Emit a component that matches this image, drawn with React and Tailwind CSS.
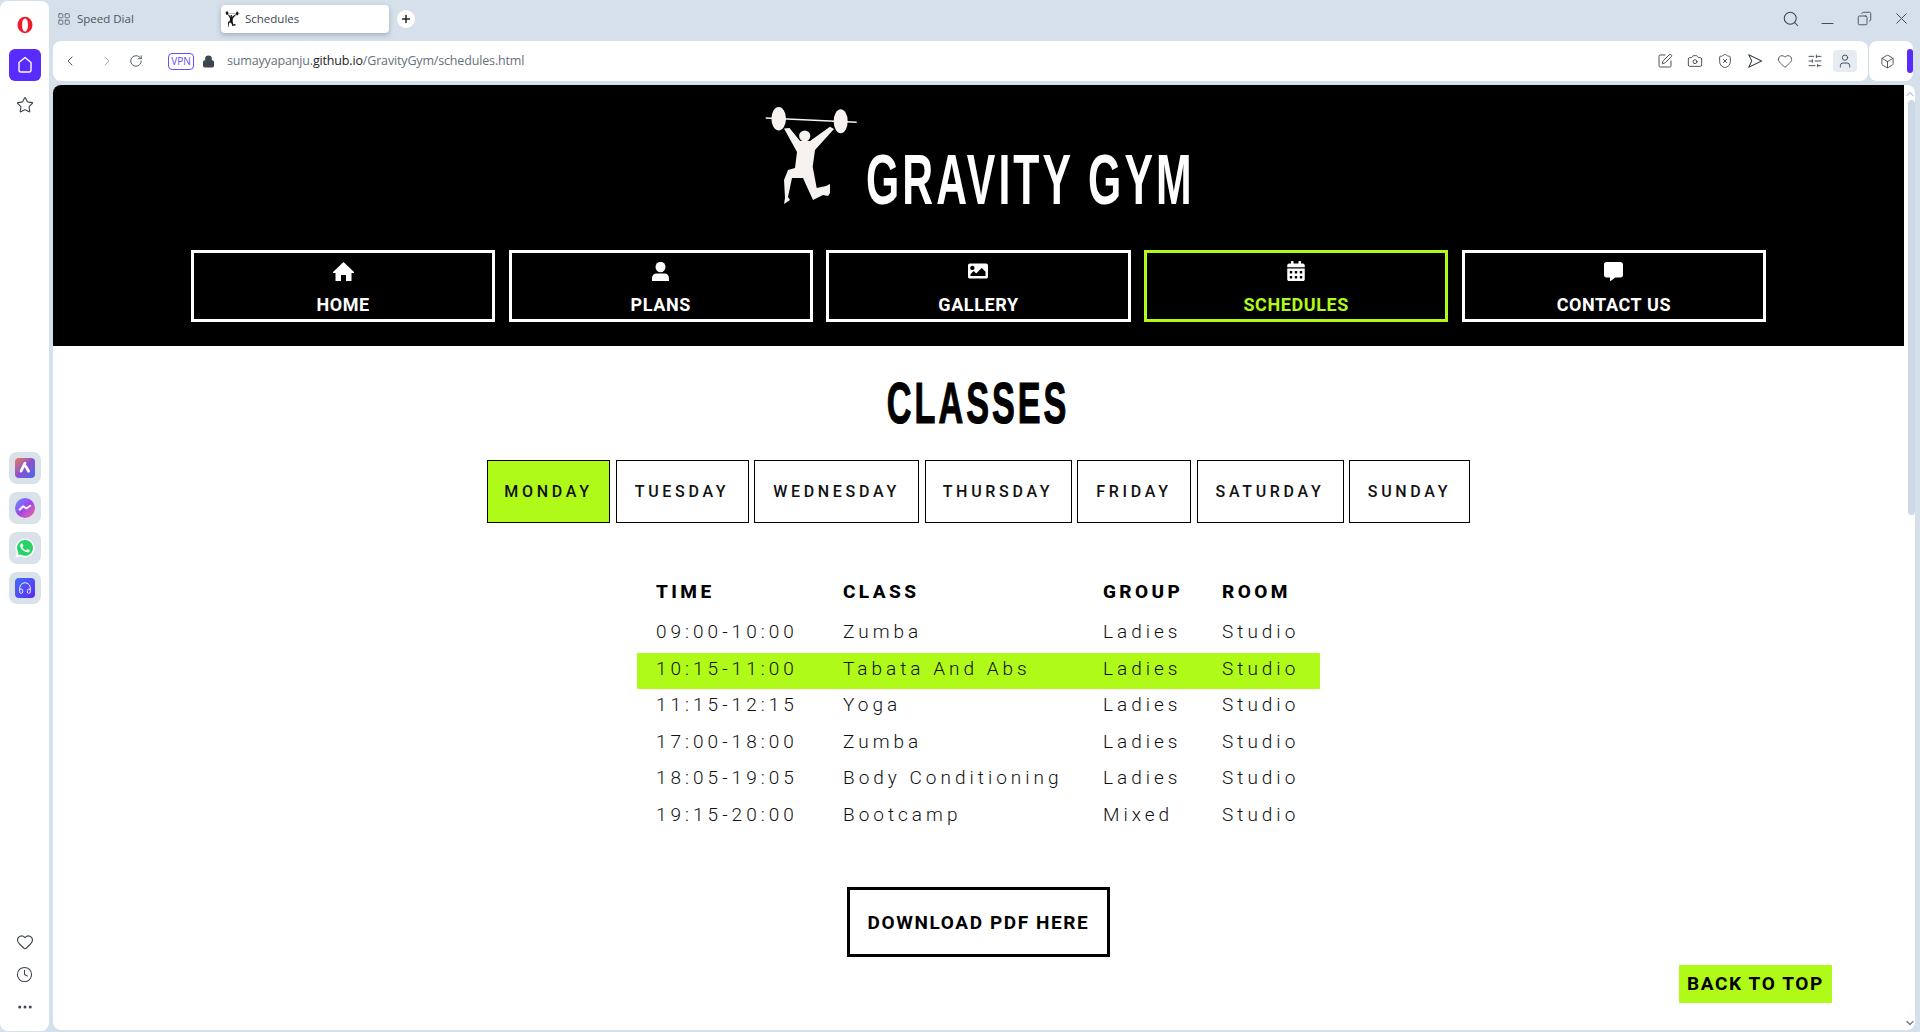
import { Camera, ChevronDown, ChevronLeft, ChevronRight, ChevronUp, Clock, Copy, Box, Headphones, Heart, LayoutGrid, Lock, Minus, MoreHorizontal, Plus, RotateCw, Search, ShieldX, SlidersHorizontal, SquarePen, Star, User, X } from 'lucide-react';
import { FaCalendarAlt, FaCommentAlt, FaImage, FaWhatsapp } from 'react-icons/fa';

const HomeGlyph = () => (
    <svg viewBox="0 0 21 19" className="w-[21px] h-[19px]" fill="currentColor">
        <path d="M10.5 0 L21 10 L21 11 H18.5 V19 H13 V13 H8 V19 H2.5 V11 H0 V10 Z" />
    </svg>
);

const UserGlyph = () => (
    <svg viewBox="0 0 17 19" className="w-[17px] h-[19px]" fill="currentColor">
        <ellipse cx="8.5" cy="5" rx="5" ry="5.2" />
        <path d="M0 19 V16 a4.5 4.5 0 0 1 4.5-4.5 H12.5 a4.5 4.5 0 0 1 4.5 4.5 V19 Z" />
    </svg>
);

const navItems = [
    { label: 'HOME', icon: <HomeGlyph /> },
    { label: 'PLANS', icon: <UserGlyph /> },
    { label: 'GALLERY', icon: <FaImage size={20} /> },
    { label: 'SCHEDULES', icon: <FaCalendarAlt size={20} className="text-white" />, active: true },
    { label: 'CONTACT US', icon: <FaCommentAlt size={19} /> },
];

const days = [
    { label: 'MONDAY', width: 'w-[123px]', active: true },
    { label: 'TUESDAY', width: 'w-[133px]' },
    { label: 'WEDNESDAY', width: 'w-[165px]' },
    { label: 'THURSDAY', width: 'w-[147px]' },
    { label: 'FRIDAY', width: 'w-[114px]' },
    { label: 'SATURDAY', width: 'w-[147px]' },
    { label: 'SUNDAY', width: 'w-[121px]' },
];

const rows = [
    ['09:00-10:00', 'Zumba', 'Ladies', 'Studio'],
    ['10:15-11:00', 'Tabata And Abs', 'Ladies', 'Studio'],
    ['11:15-12:15', 'Yoga', 'Ladies', 'Studio'],
    ['17:00-18:00', 'Zumba', 'Ladies', 'Studio'],
    ['18:05-19:05', 'Body Conditioning', 'Ladies', 'Studio'],
    ['19:15-20:00', 'Bootcamp', 'Mixed', 'Studio'],
];

// barbell lifter silhouette, used big in the header and tiny as the favicon
const Lifter = ({ className, fill }) => (
    <svg viewBox="0 0 110 110" className={className} fill={fill}>
        <ellipse cx="18.7" cy="18.7" rx="7.3" ry="11.7" />
        <ellipse cx="80.7" cy="21.3" rx="7" ry="12" />
        <path d="M5.7 17.2 L96.7 21.6 L96.7 23 L5.7 18.8 Z" />
        <circle cx="44.7" cy="36" r="5.6" />
        <path d="M24 28.5 L29.5 28 L40 41 L50 41 L70 26.7 L74 29 L55 50 L52.7 66.7 L56.7 88 L66 86 L70 84 L70 93 L68 96 L63 95 L53 100 L43 78 L32 78 L28 97 L30 100 L24 104 L25 98 L24 80 L28 70 L35 68 L37 52 Z" />
    </svg>
);

const OperaLogo = () => (
    <svg viewBox="0 0 18 18" className="w-[18px] h-[18px]">
        <ellipse cx="9" cy="9" rx="7.5" ry="8.2" fill="#f01b2d" />
        <ellipse cx="9" cy="9" rx="3" ry="6.6" fill="white" />
    </svg>
);

const AppTile = ({ children }) => (
    <div className="w-8 h-8 rounded-lg bg-[#dae2e9] flex items-center justify-center">{children}</div>
);

const Sidebar = () => (
    <aside className="w-[49px] h-[1030px] mt-px bg-white rounded-lg flex flex-col items-center shrink-0">
        <div className="h-[48px] flex items-center justify-center">
            <OperaLogo />
        </div>
        <div className="w-8 h-8 rounded-md bg-[#5a2bff] flex items-center justify-center">
            <svg viewBox="0 0 20 20" className="w-5 h-5" fill="none" stroke="white" strokeWidth="1.4" strokeLinejoin="round">
                <path d="M10 2.5 L16 7.5 V15 a2 2 0 0 1 -2 2 H6 a2 2 0 0 1 -2 -2 V7.5 Z" />
            </svg>
        </div>
        <Star size={18} strokeWidth={1.5} className="text-[#3d4650] mt-[15px]" />
        <div className="flex flex-col gap-2 mt-[338px]">
            <AppTile>
                <div className="w-5 h-5 rounded bg-linear-to-br from-[#f0703a] via-[#8a4fd0] to-[#3b6be8] flex items-center justify-center">
                    <svg viewBox="0 0 20 20" className="w-4 h-4" fill="none" stroke="white" strokeWidth="3.4" strokeLinecap="round">
                        <path d="M10 4 L5 14 M11 8 L14.5 14" />
                    </svg>
                </div>
            </AppTile>
            <AppTile>
                <div className="w-5 h-5 rounded-full bg-linear-to-br from-[#3f8cff] via-[#a040f0] to-[#ff5a80] flex items-center justify-center">
                    <svg viewBox="0 0 20 20" className="w-[18px] h-[18px]" fill="none" stroke="white" strokeWidth="2.2" strokeLinejoin="round">
                        <path d="M3.5 12.5 L8 8 L11.5 10.5 L16.5 7" />
                    </svg>
                </div>
            </AppTile>
            <AppTile>
                <div className="w-[18px] h-[18px] rounded-full bg-[#25d366] flex items-center justify-center">
                    <FaWhatsapp size={22} className="text-white shrink-0" />
                </div>
            </AppTile>
            <AppTile>
                <div className="w-5 h-5 rounded bg-linear-to-br from-[#3f6cff] to-[#5a20f0] flex items-center justify-center">
                    <Headphones size={14} strokeWidth={1.5} className="text-white" />
                </div>
            </AppTile>
        </div>
        <Heart size={18} strokeWidth={1.5} className="text-[#3d4650] mt-[329px]" />
        <Clock size={17} strokeWidth={1.5} className="text-[#3d4650] mt-[15px]" />
        <MoreHorizontal size={18} strokeWidth={2} className="text-[#3d4650] mt-[15px]" />
    </aside>
);

const TabBar = () => (
    <div className="h-[41px] flex items-center text-[11.5px] text-[#4a5560] font-['Open_Sans',sans-serif] pl-[4px] relative">
        <LayoutGrid size={14} strokeWidth={1.3} className="-mt-[3px]" />
        <span className="ml-[6px] -mt-[3px] w-[144px]">Speed Dial</span>
        <div className="w-[168px] h-[28px] -mt-[3px] bg-white rounded shadow-[0_2px_5px_rgba(60,80,100,0.35)] flex items-center pl-[3px] text-[#3d4650]">
            <Lifter className="w-[18px] h-[18px]" fill="#111" />
            <span className="ml-[3px]">Schedules</span>
        </div>
        <div className="w-[18px] h-[18px] ml-[8px] -mt-[3px] bg-white rounded-full flex items-center justify-center">
            <Plus size={12} strokeWidth={3} className="text-[#222]" />
        </div>
        <div className="ml-auto flex items-center gap-[17px] pr-[9px] text-[#3d4650] -mt-[4px]">
            <Search size={18} strokeWidth={1.4} className="mr-[1px]" />
            <Minus size={19} strokeWidth={1.2} className="translate-y-[5px]" />
            <Copy size={15} strokeWidth={1.4} className="mx-[3px] -scale-x-100" />
            <X size={19} strokeWidth={1.2} />
        </div>
    </div>
);

const AddressBar = () => (
    <div className="h-[40px] flex gap-px pr-[7px]">
        <div className="flex-1 bg-white rounded-lg flex items-center text-[#4a5560]">
            <ChevronLeft size={16} strokeWidth={1.5} className="ml-[9px]" />
            <ChevronRight size={16} strokeWidth={1.5} className="ml-[21px] text-[#a9b2ba]" />
            <RotateCw size={14} strokeWidth={1.6} className="ml-[14px]" />
            <div className="ml-[25px] w-[26px] h-[17px] border border-[#6a4dff] rounded text-[10px] leading-[15px] text-center text-[#6a4dff] font-['Open_Sans',sans-serif]">VPN</div>
            <Lock size={13} strokeWidth={2.2} fill="#3d4650" className="ml-[8px] text-[#3d4650]" />
            <div className="ml-[12px] mt-px text-[12.5px] tracking-[-0.16px] text-[#66717c] font-['Open_Sans',sans-serif]">
                sumayyapanju.<span className="text-[#222]">github.io</span>/GravityGym/schedules.html
            </div>
            <div className="ml-auto flex items-center gap-[14px] pr-[11px] text-[#3d4650]">
                <SquarePen size={16} strokeWidth={1.4} />
                <Camera size={16} strokeWidth={1.4} />
                <ShieldX size={16} strokeWidth={1.4} />
                <svg viewBox="0 0 14 14" className="w-[16px] h-[16px]" fill="none" stroke="currentColor" strokeWidth="0.9" strokeLinejoin="round">
                    <path d="M1.5 1.5 L12.8 7 L1.5 12.5 L4.2 7 Z" />
                </svg>
                <Heart size={16} strokeWidth={1.3} />
                <SlidersHorizontal size={16} strokeWidth={1.4} />
                <div className="w-[24px] h-[22px] -ml-[4px] rounded bg-[#e6ecf1] flex items-center justify-center">
                    <User size={16} strokeWidth={1.4} />
                </div>
            </div>
        </div>
        <div className="w-[44px] bg-white rounded-lg flex items-center text-[#3d4650]">
            <Box size={15} strokeWidth={1.4} className="ml-[11px]" />
            <div className="ml-[12px] w-[6px] h-[24px] rounded-full bg-[#5a2bff]" />
        </div>
    </div>
);

const Header = () => (
    <header className="bg-black h-[261px] pt-[15px]">
        <div className="flex justify-center items-end h-[110px]">
            <Lifter className="w-[110px] h-[110px] -ml-[8px] shrink-0" fill="#f5f2f0" />
            <h1 className="w-[323px] -ml-[4px] -mb-[5px] text-[70px] leading-[70px] text-white font-['Liberation_Sans',sans-serif] font-bold">
                <span className="inline-block origin-left scale-x-[0.61] tracking-[5px] whitespace-nowrap">GRAVITY GYM</span>
            </h1>
        </div>
        <nav className="grid grid-cols-5 gap-[13.5px] px-[138px] mt-[40px]">
            {navItems.map(item => (
                <a
                    key={item.label}
                    className={`h-[72px] border-[3px] flex flex-col items-center text-[18px] leading-[22px] font-bold tracking-[0.6px] ${item.active ? 'border-[#b0fa1a] text-[#b0fa1a]' : 'border-white text-white'}`}
                >
                    <div className="h-[20px] mt-[8px] flex items-center text-white">{item.icon}</div>
                    <span className="mt-[13px]">{item.label}</span>
                </a>
            ))}
        </nav>
    </header>
);

const ClassTable = () => (
    <table className="w-[683px] mx-auto mt-[47px] table-fixed border-collapse text-[19px] leading-[20px] text-[#111]">
        <thead>
            <tr className="h-[46px]">
                <th className="w-[187px] pl-[19px] pt-[12px] align-top text-left font-extrabold tracking-[3.4px] text-black">TIME</th>
                <th className="w-[260px] pl-[19px] pt-[12px] align-top text-left font-extrabold tracking-[3.4px] text-black">CLASS</th>
                <th className="w-[119px] pl-[19px] pt-[12px] align-top text-left font-extrabold tracking-[3.4px] text-black">GROUP</th>
                <th className="pl-[19px] pt-[12px] align-top text-left font-extrabold tracking-[3.4px] text-black">ROOM</th>
            </tr>
        </thead>
        <tbody>
            {rows.map((row, i) => (
                <tr key={row[0]} className={`h-[36.6px] ${i === 1 ? 'bg-[#b0fa1a]' : ''}`}>
                    {row.map((cell, j) => (
                        <td key={j} className="pl-[19px] pt-[6px] align-top font-light tracking-[4px] whitespace-nowrap">{cell}</td>
                    ))}
                </tr>
            ))}
        </tbody>
    </table>
);

const App = () => {
    return (
        <div className="w-[1920px] h-[1032px] overflow-hidden bg-[#d6e0ea] flex font-['Roboto',sans-serif]">
            <Sidebar />
            <div className="flex-1 pl-[4px] flex flex-col min-w-0">
                <TabBar />
                <AddressBar />
                <div className="mt-[4px] mr-[5px] h-[945px] bg-white rounded-lg flex overflow-hidden relative">
                    <main className="flex-1 min-w-0 relative">
                        <Header />
                        <h2 className="mt-[27px] text-center text-[57px] leading-[60px] font-bold text-black font-['Liberation_Sans',sans-serif]">
                            <span className="inline-block scale-x-[0.6] tracking-[5px] [-webkit-text-stroke:1.2px_black]">CLASSES</span>
                        </h2>
                        <div className="flex justify-center gap-[5.5px] mt-[27px]">
                            {days.map(d => (
                                <button
                                    key={d.label}
                                    className={`${d.width} h-[63px] border border-black text-[16px] font-medium tracking-[3.7px] text-[#111] ${d.active ? 'bg-[#b0fa1a]' : 'bg-white'}`}
                                >
                                    {d.label}
                                </button>
                            ))}
                        </div>
                        <ClassTable />
                        <div className="flex justify-center mt-[51px]">
                            <button className="w-[263px] h-[70px] pt-[3px] border-[3px] border-black text-[19px] font-bold tracking-[1.6px] text-black">DOWNLOAD PDF HERE</button>
                        </div>
                        <a className="absolute left-[1626px] top-[880px] w-[153px] h-[38px] bg-[#b0fa1a] text-[19px] leading-[38px] text-center font-bold tracking-[1.6px] text-black">BACK TO TOP</a>
                    </main>
                    <div className="w-[11px] flex flex-col items-center text-[#7a8590]">
                        <ChevronUp size={12} strokeWidth={3} className="mt-[3px] text-[#c3cdd6]" />
                        <div className="w-[7px] h-[415px] ml-[3px] rounded-full bg-[#ccd8e4]" />
                        <ChevronDown size={12} strokeWidth={3} className="mt-auto mb-[1px]" />
                    </div>
                </div>
            </div>
        </div>
    );
};

export default App;
